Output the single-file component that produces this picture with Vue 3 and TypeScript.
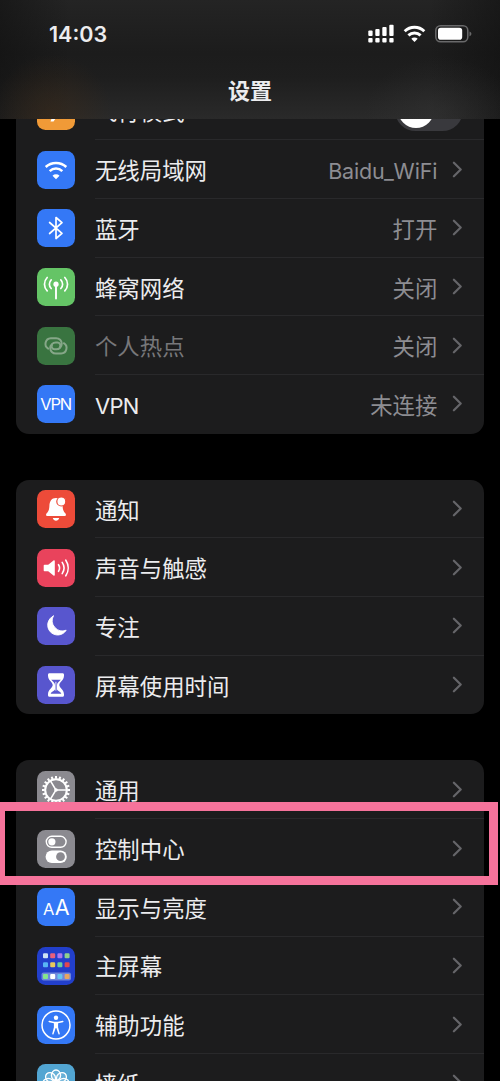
<script setup lang="ts">
interface Row {
  icon: string
  label: string
  value?: string
  toggle?: boolean
  dim?: boolean
}

const groups: Row[][] = [
  [
    { icon: 'plane', label: '飞行模式', toggle: true },
    { icon: 'wifi', label: '无线局域网', value: 'Baidu_WiFi' },
    { icon: 'bluetooth', label: '蓝牙', value: '打开' },
    { icon: 'cellular', label: '蜂窝网络', value: '关闭' },
    { icon: 'hotspot', label: '个人热点', value: '关闭', dim: true },
    { icon: 'vpn', label: 'VPN', value: '未连接' },
  ],
  [
    { icon: 'bell', label: '通知' },
    { icon: 'sound', label: '声音与触感' },
    { icon: 'moon', label: '专注' },
    { icon: 'hourglass', label: '屏幕使用时间' },
  ],
  [
    { icon: 'gear', label: '通用' },
    { icon: 'control', label: '控制中心' },
    { icon: 'display', label: '显示与亮度' },
    { icon: 'home', label: '主屏幕' },
    { icon: 'access', label: '辅助功能' },
    { icon: 'wallpaper', label: '墙纸' },
  ],
]

const teeth = Array.from({ length: 20 }, (_, i) => i * 18)
const petals = Array.from({ length: 8 }, (_, i) => i * 45)
const apps: string[][] = [
  ['#cfe3f4', '#e8607c', '#a877f0', '#8fd08c'],
  ['#58b4f5', '#e6c95c', '#67cfa0', '#e0474f'],
  ['#86e58c', '#ffffff', '#67c5ef', '#e8a661'],
]
</script>

<template>
  <main class="screen">
    <div class="list">
      <section v-for="(group, g) in groups" :key="g" class="card">
        <div v-for="row in group" :key="row.label" class="row" :class="{ dim: row.dim }">
          <span class="tile" :class="row.icon">
            <svg viewBox="0 0 38 38" width="38" height="38" fill="none" stroke-linecap="round" stroke-linejoin="round">
              <path v-if="row.icon === 'plane'" d="M29 17c1.800 0 3 1 3 2s-1.200 2-3 2h-6.500L16.500 29.500h-3l3-8.500h-6L8.500 23.500H6.500L8 19l-1.500-4.500h2l2 2.500h6l-3-8.500h3l6 8.500z" fill="#fff" />
              <g v-else-if="row.icon === 'wifi'">
                <path d="M8.700 16a15 15 0 0 1 20.600 0M12.700 20.100a9.200 9.200 0 0 1 12.600 0" stroke="#fff" stroke-width="2.500" stroke-linecap="butt" />
                <path d="M19 28.200l-3.500-3.500a5 5 0 0 1 7 0z" fill="#fff" />
              </g>
              <path v-else-if="row.icon === 'bluetooth'" d="M12.600 13.500L25 24.300L19 29.500V8.500L25 13.700L12.600 24.500" stroke="#fff" stroke-width="1.700" />
              <g v-else-if="row.icon === 'cellular'" stroke="#fff" stroke-width="1.700">
                <path d="M19 17v13.500" stroke-width="1.900" />
                <circle cx="19" cy="16.200" r="2.600" fill="#fff" stroke="none" />
                <path d="M14.200 11.900a6 6 0 0 0 0 8.600M23.800 11.900a6 6 0 0 1 0 8.600M10.200 9.500a9.600 9.600 0 0 0 0 13.400M27.800 9.500a9.600 9.600 0 0 1 0 13.400" />
              </g>
              <g v-else-if="row.icon === 'hotspot'" stroke="#86a788" stroke-width="2">
                <path d="M11.200 21.600a5.600 5.600 0 0 1 2.600-10.400h5.400a5.500 5.500 0 0 1 0 11.100h-1.700a2.900 2.900 0 0 1-2.500-4.300" />
                <path d="M26.800 16.200a5.600 5.600 0 0 1-2.600 10.400h-5.400a5.500 5.500 0 0 1 0-11.100h1.700a2.900 2.900 0 0 1 2.500 4.300" />
              </g>
              <text v-else-if="row.icon === 'vpn'" x="19.200" y="25" text-anchor="middle" textLength="32" class="glyph" font-size="16.500">VPN</text>
              <g v-else-if="row.icon === 'bell'" fill="#fff">
                <path d="M19 8c-4.600 0-6.400 3.400-6.600 7.800-.2 4.300-1 5.700-2.700 7.500-1.200 1.300-.6 2.700.8 2.700h17c1.400 0 2-1.400.8-2.700-1.700-1.800-2.500-3.200-2.700-7.500C25.400 11.400 23.600 8 19 8zM15.800 28h6.400c-.5 1.700-1.700 2.700-3.200 2.700s-2.700-1-3.200-2.700z" />
                <circle cx="24.300" cy="11.500" r="4.500" stroke="#ed4b39" stroke-width="1.200" />
              </g>
              <g v-else-if="row.icon === 'sound'">
                <path d="M7.500 15.700h3.700l5.300-4.300c.6-.5 1.300-.2 1.300.6v14c0 .8-.7 1.100-1.300.6l-5.300-4.300H7.500c-.5 0-.8-.3-.8-.8v-5c0-.5.300-.8.800-.8z" fill="#fff" />
                <path d="M21.500 15.700a6 6 0 0 1 0 6.600M25.200 13.400a10 10 0 0 1 0 11.200M28.800 11.200a14 14 0 0 1 0 15.600" stroke="#fff" stroke-width="1.600" />
              </g>
              <path v-else-if="row.icon === 'moon'" d="M16.300 9a10 10 0 1 0 12.900 14.200 10.300 10.300 0 0 1-12.900-14.200z" fill="#fff" stroke="#fff" stroke-width=".9" />
              <g v-else-if="row.icon === 'hourglass'">
                <path d="M12.500 7.200h13c1 0 1.500.6 1.500 1.500v.8c0 5.100-4.700 6.700-4.700 9.500s4.700 4.400 4.700 9.500v.8c0 .9-.5 1.500-1.500 1.500h-13c-1 0-1.500-.6-1.500-1.500v-.8c0-5.100 4.700-6.700 4.700-9.500S11 14.600 11 9.500v-.8c0-.9.500-1.500 1.500-1.500z" fill="#fff" />
                <path d="M14.200 13.700h9.600c-1.500 2-3.800 2.800-3.800 5.300v4.300c0 1.500 3.700 2.100 4.300 4.500H13.700c.6-2.400 4.300-3 4.300-4.500V19c0-2.500-2.300-3.300-3.800-5.300z" fill="#5b58d0" />
                <path d="M18.900 16.200v8" stroke="#fff" stroke-width=".9" />
              </g>
              <g v-else-if="row.icon === 'gear'" stroke="#fff">
                <circle cx="19" cy="19" r="10.800" stroke-width="2" />
                <path v-for="a in teeth" :key="a" d="M19 5v2.800" stroke-width="2" stroke-linecap="butt" :transform="`rotate(${a} 19 19)`" />
                <path d="M19.500 19h9.800M18.700 19.400l-5.100 8.500M18.700 18.600l-5.100-8.500" stroke-width="1.600" />
                <circle cx="19" cy="19" r="1.800" fill="#fff" stroke="none" />
              </g>
              <g v-else-if="row.icon === 'control'">
                <rect x="9.300" y="6.300" width="19.800" height="11" rx="5.500" stroke="#fff" stroke-width="1.400" />
                <circle cx="14.900" cy="11.800" r="3.600" fill="#fff" />
                <rect x="8.600" y="20.500" width="21.200" height="12.500" rx="6.250" fill="#fff" />
                <circle cx="23.500" cy="26.700" r="4.400" fill="#8b8a90" />
              </g>
              <g v-else-if="row.icon === 'display'" class="glyph">
                <text x="5.900" y="27" font-size="16.500">A</text>
                <text x="17.700" y="27" font-size="21.500">A</text>
              </g>
              <g v-else-if="row.icon === 'home'">
                <rect x="4.500" y="25.500" width="29.500" height="8" rx="2" fill="#6f86dc" />
                <template v-for="(line, r) in apps" :key="r">
                  <rect v-for="(color, c) in line" :key="c" :x="6 + c * 7.200" :y="[6.300, 15.300, 27][r]" width="5" height="5" rx="1.100" :fill="color" />
                </template>
              </g>
              <g v-else-if="row.icon === 'access'">
                <circle cx="19" cy="19" r="14" stroke="#fff" stroke-width="1.500" />
                <circle cx="19" cy="11.800" r="2.200" fill="#fff" />
                <path d="M12.200 15.500l4.800 1.100h4l4.800-1.100" stroke="#fff" stroke-width="1.500" />
                <path d="M16.900 16h4.200v5.200l1.800 7-1.300.4-2.300-6.600h-.6l-2.300 6.600-1.300-.4 1.800-7z" fill="#fff" />
              </g>
              <g v-else stroke="#fff" stroke-width="1.300">
                <ellipse v-for="a in petals" :key="a" cx="19" cy="11.300" rx="4.600" ry="5.300" fill="#ffffff20" :transform="`rotate(${a} 19 19)`" />
                <circle cx="19" cy="19" r="3" />
              </g>
            </svg>
          </span>
          <div class="body">
            <span class="label" :class="{ abbr: row.label === 'VPN' }">{{ row.label }}</span>
            <span v-if="row.toggle" class="switch"></span>
            <template v-else>
              <span v-if="row.value" class="value" :class="{ latin: row.value === 'Baidu_WiFi' }">{{ row.value }}</span>
              <svg class="chevron" viewBox="0 0 10 17" width="10" height="17" fill="none">
                <path d="M1.900 1.700l6.800 6.800-6.800 6.800" stroke="#656569" stroke-width="2.200" stroke-linecap="round" stroke-linejoin="round" />
              </svg>
            </template>
          </div>
        </div>
      </section>
    </div>

    <header class="top">
      <div class="status">
        <span class="time">14:03</span>
        <svg class="indicators" viewBox="0 0 104 20" width="104" height="20">
          <g fill="#fff">
            <rect x="0.300" y="6.500" width="4.300" height="5.500" rx="1" />
            <rect x="7.300" y="5" width="4.300" height="7" rx="1" />
            <rect x="14.300" y="3" width="4.300" height="9" rx="1" />
            <rect x="21.300" y=".7" width="4.300" height="11.300" rx="1" />
            <rect v-for="x in [0.300, 7.300, 14.300, 21.300]" :key="x" :x="x" y="14" width="4.300" height="4.500" rx="1" />
            <path d="M46.500 18l-3.200-3.300a4.600 4.600 0 0 1 6.400 0z" />
          </g>
          <path d="M36.700 7.200a14.200 14.200 0 0 1 19.600 0M40.400 11.400a8.800 8.800 0 0 1 12.200 0" fill="none" stroke="#fff" stroke-width="2.900" />
          <rect x="67.800" y="1.700" width="32" height="16.100" rx="4.800" fill="none" stroke="#69696a" stroke-width="1.500" />
          <rect x="70" y="3.800" width="24.200" height="11.900" rx="2.800" fill="#fff" />
          <path d="M101.500 7.400c1.300.5 1.900 1.300 1.900 2.400s-.6 1.900-1.900 2.400z" fill="#69696a" />
        </svg>
      </div>
      <h1 class="title">设置</h1>
    </header>

    <div class="highlight"></div>
  </main>
</template>

<style>
body {
  background: #000;
}
</style>

<style scoped>
.screen {
  position: relative;
  width: 500px;
  height: 1081px;
  overflow: hidden;
  background: #000;
  color: #ececee;
  font-family: Inter, "Noto Sans CJK SC", sans-serif;
}

.list {
  display: flex;
  flex-direction: column;
  gap: 46px;
  padding: 81.600px 15.700px 0 16.300px;
}

.card {
  background: #1c1c1d;
  border-radius: 13px;
}

.row {
  display: flex;
  align-items: center;
  gap: 20px;
  height: 58.700px;
  padding-left: 20.700px;
}

.body {
  display: flex;
  flex: 1;
  align-items: center;
  box-sizing: border-box;
  height: 100%;
  padding-right: 21px;
  border-bottom: 1px solid #29292b;
}

.row:last-child .body {
  border-bottom-color: transparent;
}

.label {
  flex: 1;
  font-size: 22.400px;
  line-height: 30px;
  white-space: nowrap;
  padding-top: 4px;
}

.label.abbr {
  font-size: 22px;
  letter-spacing: -0.700px;
}

.value {
  margin-right: 15px;
  padding-top: 4px;
  color: #8d8d92;
  font-size: 22.400px;
  line-height: 30px;
}

.value.latin {
  padding-top: 3px;
  font-size: 21.500px;
  letter-spacing: -0.150px;
}

.dim .label {
  color: #77777a;
}

.chevron {
  margin-right: 1px;
}

.tile {
  display: block;
  width: 38px;
  height: 38px;
  border-radius: 8.500px;
  overflow: hidden;
}

.tile svg {
  display: block;
}

.glyph {
  fill: #fff;
  font-family: Inter, sans-serif;
}

.plane { background: #f09a37; }
.wifi, .bluetooth, .vpn, .display, .access { background: #3478f6; }
.cellular { background: #65c466; }
.hotspot { background: #397440; }
.bell { background: #ed4b39; }
.sound { background: #e9435c; }
.moon, .hourglass { background: #5856ce; }
.gear, .control { background: #8b8a90; }
.home { background: #223fcb; }
.wallpaper { background: #52a5d2; }

.switch {
  box-sizing: border-box;
  width: 68px;
  height: 41px;
  padding: 2.500px;
  border-radius: 21px;
  background: #39393d;
}

.switch::before {
  content: "";
  display: block;
  width: 36px;
  height: 36px;
  border-radius: 50%;
  background: #fff;
}

.top {
  position: absolute;
  inset: 0 0 auto;
  height: 119px;
  background:
    radial-gradient(ellipse 60px 60px at 52px 114px, #3a291890, #3a291800),
    radial-gradient(ellipse 75px 55px at 440px 112px, #38383860, #38383800),
    linear-gradient(90deg, #10101090, #10101000 14%, #10101000 86%, #10101090),
    linear-gradient(#242424, #1c1c1c 45%, #1e1e1e 65%, #2a2a2a);
}

.status {
  display: flex;
  align-items: center;
  justify-content: space-between;
  height: 68px;
  padding: 0 28px 0 49px;
}

.time {
  font-size: 21.500px;
  font-weight: 600;
  letter-spacing: 0;
}

.title {
  margin: 7px 0 0;
  font-size: 22px;
  font-weight: 700;
  line-height: 32px;
  text-align: center;
}

.highlight {
  position: absolute;
  top: 802px;
  left: -4px;
  box-sizing: border-box;
  width: 501.500px;
  height: 83px;
  border: 9.400px solid #f6739b;
}
</style>
